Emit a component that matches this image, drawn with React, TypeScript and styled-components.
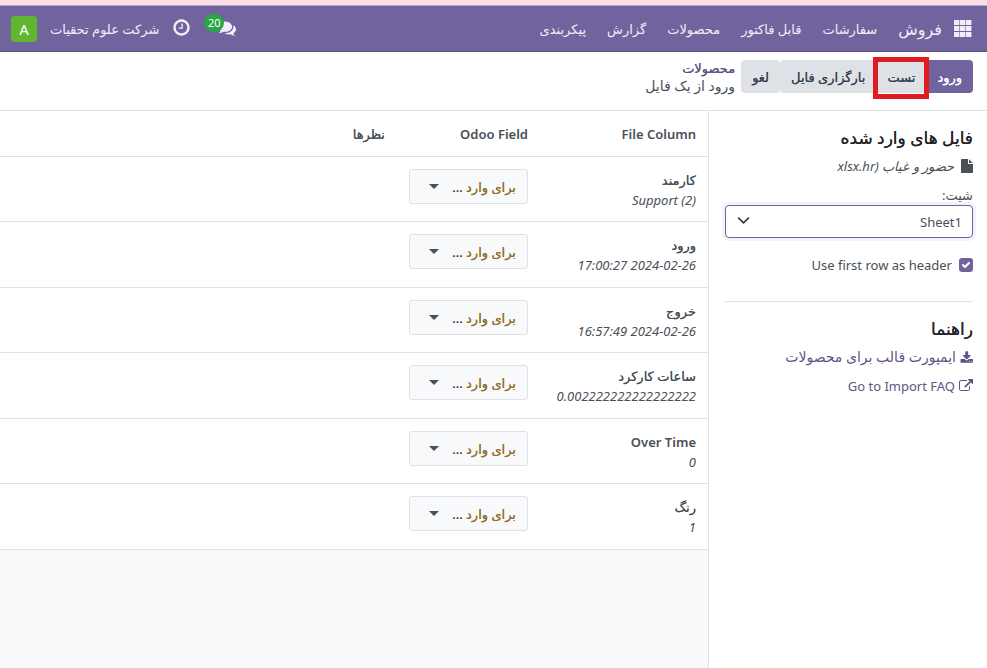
import React from "react";
import styled, { createGlobalStyle } from "styled-components";

const Global = createGlobalStyle`
  *, *::before, *::after { box-sizing: border-box; }
  html, body, #root { height: 100%; }
  body {
    margin: 0;
    background: #fff;
    color: #495057;
    font-family: "Noto Sans", "DejaVu Sans", sans-serif;
    font-size: 13px;
    line-height: 20px;
  }
  button, select, input { font: inherit; margin: 0; }
`;

const Page = styled.div`
  min-height: 100%;
  display: flex;
  flex-direction: column;
  border-top: 5px solid #fcdfe6;
`;

const Navbar = styled.header`
  height: 47px;
  flex: none;
  display: flex;
  align-items: center;
  justify-content: space-between;
  padding: 0 15px 0 11px;
  background: #71639e;
  border-top: 1px solid #b7aacb;
  border-bottom: 1px solid #5a4f7f;
  color: #f1eef8;
`;

const NavGroup = styled.nav`
  display: flex;
  align-items: center;
  gap: 21px;
`;

const AppsButton = styled.button`
  display: flex;
  padding: 0;
  border: 0;
  background: none;
  color: inherit;
  margin-inline-end: -9px;
`;

const NavLink = styled.a<{ $brand?: boolean }>`
  color: inherit;
  text-decoration: none;
  white-space: nowrap;
  font-size: ${(p) => (p.$brand ? 16 : 13)}px;
`;

const Tray = styled.div`
  display: flex;
  align-items: center;
  gap: 13px;
`;

const TrayButton = styled.button<{ $wide?: boolean }>`
  position: relative;
  display: flex;
  padding: 0 0 2px;
  border: 0;
  background: none;
  color: inherit;
  margin-inline-end: ${(p) => (p.$wide ? 14 : 0)}px;
`;

const Badge = styled.span`
  position: absolute;
  right: 12px;
  top: -5px;
  min-width: 20px;
  padding: 0 3px;
  border-radius: 9px;
  background: #28a745;
  color: #fff;
  font-size: 11px;
  line-height: 18px;
`;

const Avatar = styled.button`
  width: 26px;
  height: 26px;
  padding: 0;
  border: 0;
  border-radius: 4px;
  background: #62b52f;
  color: #fff;
  font-size: 15px;
  line-height: 26px;
`;

const ControlPanel = styled.div`
  height: 59px;
  flex: none;
  display: flex;
  align-items: flex-start;
  gap: 6px;
  padding: 8px 14px 0;
  border-bottom: 1px solid #dee2e6;
`;

const Actions = styled.div`
  display: flex;
`;

const Action = styled.button<{ $primary?: boolean }>`
  position: relative;
  height: 33px;
  padding: 0 11px;
  border: 0;
  border-radius: 4px;
  background: ${(p) => (p.$primary ? "#71639e" : "#dee2e6")};
  color: ${(p) => (p.$primary ? "#fff" : "#374151")};
  text-shadow: 0 0 0 currentColor;
  white-space: nowrap;
`;

const Highlight = styled.span`
  position: absolute;
  inset: -3px -3px -6px;
  z-index: 1;
  border: 5px solid #e11b22;
`;

const Breadcrumb = styled.div`
  display: flex;
  flex-direction: column;
  font-size: 14px;
  line-height: 17px;
`;

const Crumb = styled.a`
  color: #5f5484;
  font-size: 13px;
  text-decoration: none;
  text-shadow: 0 0 0 currentColor;
`;

const Content = styled.div`
  flex: 1;
  display: flex;
`;

const Sidebar = styled.aside`
  flex: none;
  width: 279px;
  padding: 15px 14px 0 16px;
  border-left: 1px solid #dee2e6;
`;

const Heading = styled.h2`
  margin: 0;
  color: #212529;
  font-size: 17px;
  font-weight: 500;
  line-height: 24px;
  text-shadow: 0 0 0 currentColor;
`;

const FileLine = styled.div`
  display: flex;
  align-items: center;
  gap: 7px;
  margin-top: 6px;
  font-style: italic;
`;

const SheetLabel = styled.label`
  display: block;
  margin-top: 9px;
`;

const SelectWrap = styled.div`
  position: relative;
  display: flex;

  svg {
    position: absolute;
    left: 12px;
    top: 9px;
    pointer-events: none;
  }
`;

const Select = styled.select`
  width: 100%;
  height: 33px;
  padding: 0 10px;
  appearance: none;
  border: 1px solid #71639e;
  border-radius: 4px;
  background: #fff;
  box-shadow: 0 0 0 3px #f4f2fa;
  color: #495057;
`;

const CheckLine = styled.label`
  display: flex;
  align-items: center;
  gap: 7px;
  margin-top: 17px;
  padding-bottom: 26px;
  border-bottom: 1px solid #dee2e6;
`;

const CheckBox = styled.span`
  position: relative;
  display: flex;
  width: 14px;
  height: 14px;

  input {
    appearance: none;
    width: 14px;
    height: 14px;
    border-radius: 3px;
    background: #71639e;
  }

  svg {
    position: absolute;
    inset: 0;
    pointer-events: none;
  }
`;

const Help = styled.section`
  margin-top: 15px;
`;

const HelpLink = styled.a<{ $large?: boolean }>`
  display: flex;
  align-items: center;
  gap: 4px;
  margin-top: 6px;
  padding-bottom: 3px;
  color: #5f5484;
  font-size: ${(p) => (p.$large ? 14 : 13)}px;
  text-decoration: none;
`;

const Main = styled.main`
  flex: 1;
  min-width: 0;
  background: #f8f9fa;
`;

const Table = styled.table`
  width: 100%;
  table-layout: fixed;
  border-collapse: separate;
  border-spacing: 0;
  background: #fff;
`;

const Label = styled.span<{ $latin?: boolean }>`
  font-weight: ${(p) => (p.$latin ? 600 : 400)};
  text-shadow: ${(p) => (p.$latin ? "none" : "0 0 0 currentColor")};
`;

const Th = styled.th<{ $width?: number }>`
  width: ${(p) => (p.$width ? `${p.$width}px` : "auto")};
  height: 46px;
  padding: 0 12px;
  border-bottom: 1px solid #dee2e6;
  text-align: right;
`;

const Row = styled.tr`
  height: 65px;
  &:nth-child(even) { height: 66px; }
`;

const Td = styled.td`
  padding: 12px 12px 0;
  border-bottom: 1px solid #dee2e6;
  vertical-align: top;
`;

const ColumnName = styled.div`
  height: 21px;
  line-height: 22px;
`;

const Sample = styled.div`
  font-style: italic;
`;

const FieldButton = styled.button`
  display: flex;
  align-items: center;
  justify-content: space-between;
  width: 119px;
  height: 35px;
  padding: 0 11px 0 19px;
  border: 1px solid #dee2e6;
  border-radius: 3px;
  background: #f8f9fa;
  color: #495057;
  text-shadow: 0 0 0 currentColor;
  white-space: nowrap;
`;

const Placeholder = styled.span`
  color: #94702c;
`;

const faPaths = {
  clock:
    "M1024 544v448q0 14-9 23t-23 9h-320q-14 0-23-9t-9-23v-64q0-14 9-23t23-9h224v-352q0-14 9-23t23-9h64q14 0 23 9t9 23zm416 352q0-148-73-273t-198-198-273-73-273 73-198 198-73 273 73 273 198 198 273 73 273-73 198-198 73-273zm224 0q0 209-103 385.5t-279.5 279.5-385.5 103-385.5-103-279.5-279.5-103-385.5 103-385.5 279.5-279.5 385.5-103 385.5 103 279.5 279.5 103 385.5z",
  comments:
    "M1408 768q0 139-94 257t-256.5 186.5-353.5 68.5q-86 0-176-16-124 88-278 128-36 9-86 16h-3q-11 0-20.5-8t-11.5-21q-1-3-1-6.5t.5-6.5 2-6l2.5-5 3.5-5.5 4-5 4.5-5 4-4.5q5-6 23-25t26-29.5 22.5-29 25-38.5 20.5-44q-124-72-195-177t-71-224q0-139 94-257t256.5-186.5 353.5-68.5 353.5 68.5 256.5 186.5 94 257zm384 256q0 120-71 224.5t-195 176.5q10 24 20.5 44t25 38.5 22.5 29 26 29.5 23 25q1 1 4 4.5t4.5 5 4 5 3.5 5.5l2.5 5 2 6 .5 6.5-1 6.5q-3 14-13 22t-22 7q-50-7-86-16-154-40-278-128-90 16-176 16-271 0-472-132 58 4 88 4 161 0 309-45t264-129q125-92 192-212t67-254q0-77-23-152 129 71 204 178t75 230z",
  file:
    "M1152 512v-472q22 14 36 28l408 408q14 14 28 36h-472zm-128 32q0 40 28 68t68 28h544v1056q0 40-28 68t-68 28h-1344q-40 0-68-28t-28-68v-1600q0-40 28-68t68-28h800v544z",
  download:
    "M1344 1344q0-26-19-45t-45-19-45 19-19 45 19 45 45 19 45-19 19-45zm256 0q0-26-19-45t-45-19-45 19-19 45 19 45 45 19 45-19 19-45zm128-224v320q0 40-28 68t-68 28h-1472q-40 0-68-28t-28-68v-320q0-40 28-68t68-28h465l135 136q58 56 136 56t136-56l136-136h464q40 0 68 28t28 68zm-325-569q17 41-14 70l-448 448q-18 19-45 19t-45-19l-448-448q-31-29-14-70 17-39 59-39h256v-448q0-26 19-45t45-19h256q26 0 45 19t19 45v448h256q42 0 59 39z",
  external:
    "M1408 928v320q0 119-84.5 203.5t-203.5 84.5h-832q-119 0-203.5-84.5t-84.5-203.5v-832q0-119 84.5-203.5t203.5-84.5h704q14 0 23 9t9 23v64q0 14-9 23t-23 9h-704q-66 0-113 47t-47 113v832q0 66 47 113t113 47h832q66 0 113-47t47-113v-320q0-14 9-23t23-9h64q14 0 23 9t9 23zm384-864v512q0 26-19 45t-45 19-45-19l-176-176-652 652q-10 10-23 10t-23-10l-114-114q-10-10-10-23t10-23l652-652-176-176q-19-19-19-45t19-45 45-19h512q26 0 45 19t19 45z",
};

type IconProps = { name: keyof typeof faPaths; w: number; h: number; box?: string };

const Icon = ({ name, w, h, box = "0 0 1792 1792" }: IconProps) => (
  <svg width={w} height={h} viewBox={box} fill="currentColor" aria-hidden="true">
    <path d={faPaths[name]} />
  </svg>
);

const AppsIcon = () => (
  <svg width="18" height="17" viewBox="0 0 18 17" fill="currentColor" aria-hidden="true">
    {[0, 6, 12].map((y) =>
      [0, 6, 12].map((x) => <rect key={`${x}-${y}`} x={x} y={y} width="5.4" height="5" />)
    )}
  </svg>
);

const menu = ["سفارشات", "قابل فاکتور", "محصولات", "گزارش", "پیکربندی"];

const rows = [
  { name: "کارمند", sample: "Support (2)", ltr: true },
  { name: "ورود", sample: "2024-02-26 17:00:27" },
  { name: "خروج", sample: "2024-02-26 16:57:49" },
  { name: "ساعات کارکرد", sample: "0.002222222222222222" },
  { name: "Over Time", sample: "0", latin: true },
  { name: "رنگ", sample: "1" },
];

export default function App() {
  return (
    <>
      <Global />
      <Page dir="rtl" lang="fa">
        <Navbar>
          <NavGroup>
            <AppsButton aria-label="برنامه‌ها">
              <AppsIcon />
            </AppsButton>
            <NavLink href="#sales" $brand>فروش</NavLink>
            {menu.map((item) => (
              <NavLink key={item} href="#menu">{item}</NavLink>
            ))}
          </NavGroup>
          <Tray>
            <TrayButton aria-label="پیام‌ها" $wide>
              <Icon name="comments" w={18} h={18} />
              <Badge>20</Badge>
            </TrayButton>
            <TrayButton aria-label="فعالیت‌ها">
              <Icon name="clock" w={19} h={19} />
            </TrayButton>
            <NavLink href="#company">شرکت علوم تحقیات</NavLink>
            <Avatar>A</Avatar>
          </Tray>
        </Navbar>

        <ControlPanel>
          <Actions>
            <Action $primary>ورود</Action>
            <Action>تست<Highlight /></Action>
            <Action>بارگزاری فایل</Action>
            <Action>لغو</Action>
          </Actions>
          <Breadcrumb>
            <Crumb href="#products">محصولات</Crumb>
            <span>ورود از یک فایل</span>
          </Breadcrumb>
        </ControlPanel>

        <Content>
          <Sidebar>
            <Heading>فایل های وارد شده</Heading>
            <FileLine>
              <Icon name="file" w={12} h={14} box="128 0 1536 1792" />
              <span>حضور و غیاب (xlsx.hr</span>
            </FileLine>
            <SheetLabel htmlFor="sheet">شیت:</SheetLabel>
            <SelectWrap>
              <Select id="sheet" defaultValue="Sheet1">
                <option>Sheet1</option>
              </Select>
              <svg width="13" height="13" viewBox="0 0 16 16" fill="none" stroke="#343a40" strokeWidth="2" strokeLinecap="round" strokeLinejoin="round" aria-hidden="true">
                <path d="m2 5 6 6 6-6" />
              </svg>
            </SelectWrap>
            <CheckLine>
              <CheckBox>
                <input type="checkbox" defaultChecked />
                <svg width="14" height="14" viewBox="0 0 14 14" fill="none" stroke="#fff" strokeWidth="2" strokeLinecap="round" strokeLinejoin="round" aria-hidden="true">
                  <path d="m4 7 2 2 4-4" />
                </svg>
              </CheckBox>
              <span>Use first row as header</span>
            </CheckLine>
            <Help>
              <Heading>راهنما</Heading>
              <HelpLink href="#template" $large>
                <Icon name="download" w={13} h={13} box="0 0 1728 1664" />
                <span>ایمپورت قالب برای محصولات</span>
              </HelpLink>
              <HelpLink href="#faq">
                <Icon name="external" w={14} h={14} />
                <span>Go to Import FAQ</span>
              </HelpLink>
            </Help>
          </Sidebar>

          <Main>
            <Table>
              <thead>
                <tr>
                  <Th $width={168}><Label $latin>File Column</Label></Th>
                  <Th $width={143}><Label $latin>Odoo Field</Label></Th>
                  <Th><Label>نظرها</Label></Th>
                </tr>
              </thead>
              <tbody>
                {rows.map((row) => (
                  <Row key={row.name}>
                    <Td>
                      <ColumnName>
                        <Label $latin={row.latin}>{row.name}</Label>
                      </ColumnName>
                      <Sample>
                        <bdi dir={row.ltr ? "ltr" : "rtl"}>{row.sample}</bdi>
                      </Sample>
                    </Td>
                    <Td>
                      <FieldButton aria-haspopup="listbox">
                        <span><Placeholder>برای وارد</Placeholder> ...</span>
                        <svg width="10" height="5" viewBox="0 0 10 5" fill="currentColor" aria-hidden="true">
                          <path d="M0 0h10L5 5z" />
                        </svg>
                      </FieldButton>
                    </Td>
                    <Td />
                  </Row>
                ))}
              </tbody>
            </Table>
          </Main>
        </Content>
      </Page>
    </>
  );
}
